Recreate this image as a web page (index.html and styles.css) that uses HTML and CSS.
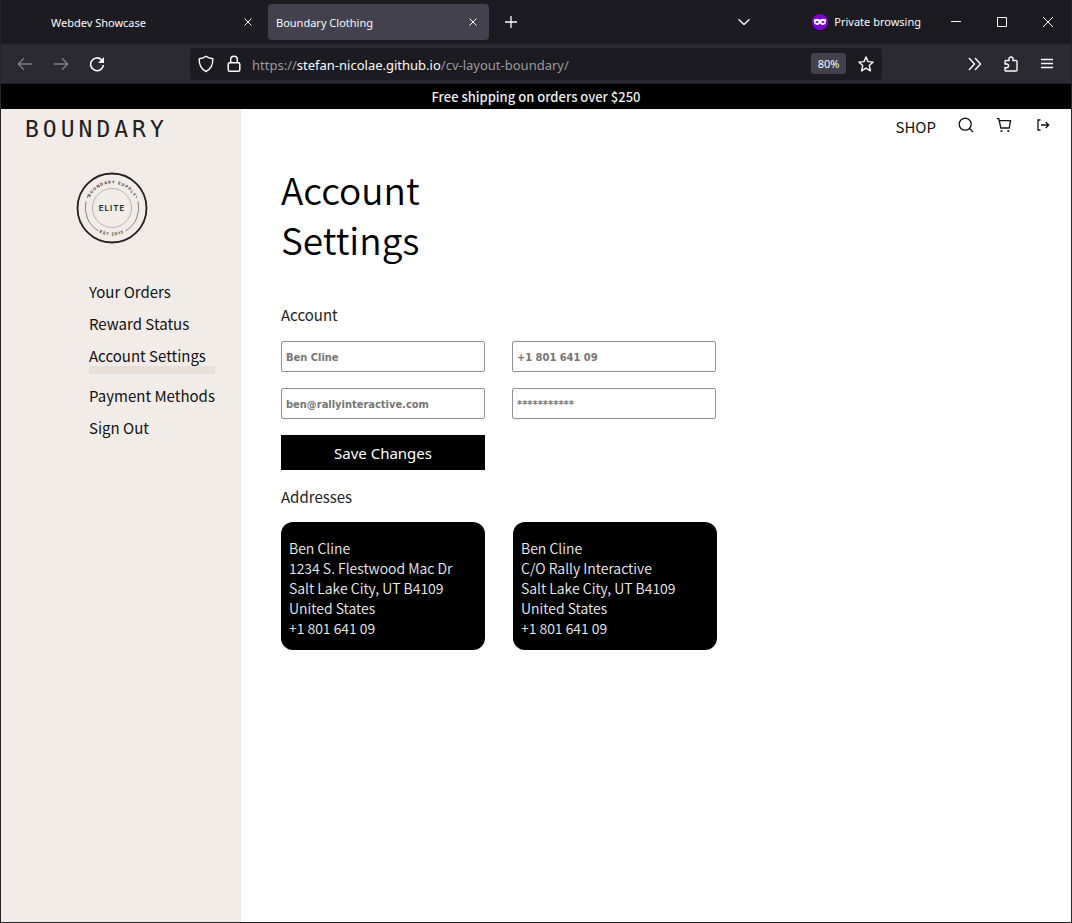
FILE: index.html
```html
<!DOCTYPE html>
<html lang="en">
<head>
<meta charset="utf-8">
<meta name="viewport" content="width=device-width, initial-scale=1">
<title>Boundary Clothing</title>
<link rel="stylesheet" href="styles.css">
</head>
<body>
<div class="window">
  <header class="browser">
    <div class="tabs">
      <div class="tab"><span class="tab-title">Webdev Showcase</span>
        <button class="icon-btn" aria-label="Close tab"><svg width="8" height="8" viewBox="0 0 8 8"><path d="M.5.5l7 7M7.500.5l-7 7"/></svg></button></div>
      <div class="tab tab-active"><span class="tab-title">Boundary Clothing</span>
        <button class="icon-btn" aria-label="Close tab"><svg width="8" height="8" viewBox="0 0 8 8"><path d="M.5.5l7 7M7.500.5l-7 7"/></svg></button></div>
      <button class="icon-btn new-tab" aria-label="New tab"><svg width="12" height="12" viewBox="0 0 12 12"><path d="M6 0v12M0 6h12" stroke-width="1.300"/></svg></button>
      <div class="window-tools">
        <button class="icon-btn list-tabs" aria-label="List all tabs"><svg width="14" height="8" viewBox="0 0 14 8"><path d="M1.500 1.200L7 6.500l5.500-5.300" stroke-width="1.300"/></svg></button>
        <span class="private"><svg width="16" height="16" viewBox="0 0 16 16"><circle cx="8" cy="8" r="8" fill="#8000d7" stroke="none"/><path d="M1.800 5.600Q5 4 8 5.700Q11 4 14.200 5.600Q14.400 11 11 11Q9.300 11 8 9.400Q6.700 11 5 11Q1.600 11 1.800 5.600z" fill="#fff" stroke="none"/><ellipse cx="5" cy="8" rx="1.500" ry="1" fill="#8000d7" stroke="none"/><ellipse cx="11" cy="8" rx="1.500" ry="1" fill="#8000d7" stroke="none"/></svg>Private browsing</span>
        <button class="icon-btn caption" aria-label="Minimize"><svg width="10" height="10" viewBox="0 0 10 10"><path d="M0 4.500h10"/></svg></button>
        <button class="icon-btn caption" aria-label="Maximize"><svg width="10" height="10" viewBox="0 0 10 10"><path d="M.5.5h9v9h-9z"/></svg></button>
        <button class="icon-btn caption" aria-label="Close"><svg width="10" height="10" viewBox="0 0 10 10"><path d="M0 0l10 10M10 0L0 10"/></svg></button>
      </div>
    </div>
    <div class="toolbar">
      <div class="history">
        <button class="icon-btn dim" aria-label="Back"><svg width="16" height="16" viewBox="0 0 16 16"><path d="M15 8H1.500M7 2.200L1.300 8 7 13.800" stroke-width="1.300"/></svg></button>
        <button class="icon-btn dim" aria-label="Forward"><svg width="16" height="16" viewBox="0 0 16 16"><path d="M1 8h13.500M9 2.200L14.700 8 9 13.800" stroke-width="1.300"/></svg></button>
        <button class="icon-btn" aria-label="Reload"><svg width="16" height="16" viewBox="0 0 16 16"><path d="M12.600 3.800A6.400 6.400 0 1 0 14.400 9" stroke-width="1.600"/><path d="M15 1v6H9z" fill="#fbfbfe" stroke="none"/></svg></button>
      </div>
      <div class="address">
        <svg width="16" height="18" viewBox="0 0 16 18"><path d="M8 1.300C6 3 3.500 3.600 1.200 3.800C1 9 2 13.500 8 16.500C14 13.500 15 9 14.800 3.800C12.500 3.600 10 3 8 1.300z" stroke-width="1.400"/></svg>
        <svg width="14" height="18" viewBox="0 0 14 18"><rect x="1.200" y="7.700" width="11.600" height="8.500" rx="1.500" stroke-width="1.500"/><path d="M3.700 7.500V4.500a3.300 3.300 0 0 1 6.600 0v3" stroke-width="1.500"/></svg>
        <span class="url">https://<b>stefan-nicolae.github.io</b>/cv-layout-boundary/</span>
        <button class="zoom">80%</button>
        <button class="icon-btn" aria-label="Bookmark"><svg width="16" height="16" viewBox="0 0 16 16"><path d="M8 1l2 4.600 5.200.5-3.900 3.500 1.100 5.300L8 12.200l-4.400 2.700 1.100-5.300L.8 6.100 6 5.600z" stroke-width="1.400" stroke-linejoin="round"/></svg></button>
      </div>
      <div class="actions">
        <button class="icon-btn" aria-label="More tools"><svg width="14" height="14" viewBox="0 0 14 14"><path d="M1 1l5.500 6L1 13M7 1l5.500 6L7 13" stroke-width="1.400"/></svg></button>
        <button class="icon-btn" aria-label="Extensions"><svg width="16" height="16" viewBox="0 0 16 16"><path d="M2 8V5.500a1 1 0 0 1 1-1h3V3a2 2 0 0 1 4 0v1.500H13a1 1 0 0 1 1 1V14a1 1 0 0 1-1 1H3a1 1 0 0 1-1-1v-2.300h1.700a1.850 1.850 0 0 0 0-3.700z" stroke-width="1.400"/></svg></button>
        <button class="icon-btn" aria-label="Menu"><svg width="14" height="14" viewBox="0 0 14 14"><path d="M1 2.500h12M1 6.500h12M1 10.500h12" stroke-width="1.300"/></svg></button>
      </div>
    </div>
  </header>

  <p class="banner">Free shipping on orders over $250</p>

  <div class="page">
    <aside class="sidebar">
      <a class="logo" href="#">BOUNDARY</a>
      <svg class="badge" width="72" height="72" viewBox="0 0 72 72" role="img" aria-label="Elite member">
        <defs><path id="arc-top" d="M11.500 36a24.500 24.500 0 0 1 49 0"/><path id="arc-bottom" d="M8.500 36a27.500 27.500 0 0 0 55 0"/></defs>
        <circle cx="36" cy="36" r="34.500" stroke="#232021" stroke-width="1.800"/>
        <circle cx="36" cy="36" r="19.500" stroke="#aaa5a2" stroke-width=".8"/>
        <path d="M10 29.500A27 27 0 0 0 22.500 59M62 29.500A27 27 0 0 1 49.500 59" stroke="#77726f" stroke-width=".9"/>
        <circle cx="11.500" cy="25" r=".7" fill="#555" stroke="none"/><circle cx="60.500" cy="25" r=".7" fill="#555" stroke="none"/>
        <text class="badge-small" text-anchor="middle"><textPath href="#arc-top" startOffset="50%">BOUNDARY SUPPLY</textPath></text>
        <text class="badge-small" text-anchor="middle"><textPath href="#arc-bottom" startOffset="50%">EST 2015</textPath></text>
        <text class="badge-name" x="36" y="39" text-anchor="middle">ELITE</text>
      </svg>
      <nav class="menu">
        <a href="#">Your Orders</a>
        <a href="#">Reward Status</a>
        <a href="#" class="current">Account Settings</a>
        <a href="#">Payment Methods</a>
        <a href="#">Sign Out</a>
      </nav>
    </aside>

    <main class="content">
      <nav class="shop-nav">
        <a href="#" class="shop">SHOP</a>
        <a href="#" aria-label="Search"><svg width="16" height="16" viewBox="0 0 16 16"><circle cx="7.200" cy="7.200" r="6" stroke-width="1.300"/><path d="M11.500 11.500l3.500 3.500" stroke-width="1.300"/></svg></a>
        <a href="#" aria-label="Cart"><svg width="16" height="16" viewBox="0 0 16 16"><path d="M.8 1.700h2l2 9.300h8.400L14.500 3.700H3.300" stroke-width="1.300"/><circle cx="5.500" cy="14" r="1.100" fill="#111" stroke="none"/><circle cx="12.300" cy="14" r="1.100" fill="#111" stroke="none"/></svg></a>
        <a href="#" aria-label="Log out"><svg width="16" height="16" viewBox="0 0 16 16"><path d="M6.500 3H4v10h2.500M7 8h7.500M11.700 5l3 3-3 3" stroke-width="1.300"/></svg></a>
      </nav>
      <div class="settings">
        <h1>Account Settings</h1>
        <h2>Account</h2>
        <form class="form">
          <input type="text" placeholder="Ben Cline" aria-label="Name">
          <input type="tel" placeholder="+1 801 641 09" aria-label="Phone">
          <input type="email" placeholder="ben@rallyinteractive.com" aria-label="Email">
          <input type="password" placeholder="***********" aria-label="Password">
          <button type="button" class="save">Save Changes</button>
        </form>
        <h2>Addresses</h2>
        <div class="addresses">
          <address>Ben Cline<br>1234 S. Flestwood Mac Dr<br>Salt Lake City, UT B4109<br>United States<br>+1 801 641 09</address>
          <address>Ben Cline<br>C/O Rally Interactive<br>Salt Lake City, UT B4109<br>United States<br>+1 801 641 09</address>
        </div>
      </div>
    </main>
  </div>
</div>
</body>
</html>
```
FILE: styles.css
```css
* { box-sizing: border-box; }
body { margin: 0; font-family: "Noto Sans CJK SC", sans-serif; color: #000; }
a { color: inherit; text-decoration: none; }
svg { display: block; flex: none; fill: none; stroke: currentColor; }
button { font: inherit; color: inherit; cursor: pointer; }

.window { min-height: 100vh; display: flex; flex-direction: column; border: 1px solid #27252a; border-top: 0; }

.browser { font: 11px/16px "Noto Sans", sans-serif; color: #fbfbfe; background: #1c1b22; }
.icon-btn { display: grid; place-items: center; flex: none; width: 16px; height: 16px; padding: 0; border: 0; background: none; }
.tabs { display: flex; align-items: center; height: 44px; padding-left: 42px; }
.tab { display: flex; align-items: center; justify-content: space-between; width: 221px; height: 36px; padding: 0 8px; border-radius: 4px; }
.tab-title { padding-top: 1px; }
.tab-active { background: #42414d; margin-left: 4px; }
.new-tab { margin-left: 14px; }
.window-tools { display: flex; align-items: center; margin-left: auto; }
.list-tabs { margin-right: 60px; }
.private { display: flex; align-items: center; gap: 6px; margin-right: 12px; }
.caption { width: 46px; height: 44px; }
.toolbar { display: flex; align-items: center; height: 40px; padding: 0 16px; background: #2b2a33; border-bottom: 1px solid #1c1b22; }
.history { display: flex; gap: 20px; width: 173px; }
.dim { color: #807f87; }
.address { display: flex; align-items: center; flex: 0 1 692px; height: 32px; padding: 0 8px; border-radius: 4px; background: #1c1b22; }
.address > svg + svg { margin-left: 13px; }
.url { flex: 1; margin-left: 11px; padding-top: 2px; font-size: 13px; color: #9b9a9f; white-space: nowrap; }
.url b { font-weight: 400; color: #fbfbfe; }
.zoom { width: 35px; height: 21px; margin-right: 12px; padding: 0; border: 0; border-radius: 3px; background: #42414d; }
.actions { display: flex; gap: 20px; margin-left: auto; }
.tab svg, .caption svg { stroke-width: 1px; }

.banner { margin: 0; background: #000; color: #eee; font-size: 13px; font-weight: 500; line-height: 25px; text-align: center; }

.page { flex: 1; display: flex; }
.sidebar { flex: 0 0 240px; padding: 6px 24px; background: #f1ece8; }
.logo { display: block; color: #232021; font: 23px/28px "DejaVu Sans Mono", monospace; letter-spacing: 4px; }
.badge { margin: 29px 0 0 51px; }
.badge-small { font: 700 4px "Inter", sans-serif; letter-spacing: 1px; fill: #333; stroke: none; }
.badge-name { font: 600 8px "Inter", sans-serif; letter-spacing: 1px; fill: #232021; stroke: none; }
.menu { display: flex; flex-direction: column; align-items: flex-start; gap: 8px; width: max-content; margin: 36px 0 0 64px; color: #111; font-size: 15px; line-height: 24px; }
.menu .current { width: 100%; height: 30px; margin-bottom: 2px; border-bottom: 8px solid #e8dfd9; }

.content { flex: 1; min-width: 0; }
.shop-nav { display: flex; justify-content: flex-end; gap: 22px; height: 36px; padding: 8px 21px 0; color: #111; }
.shop { font-size: 15px; line-height: 20px; }
.settings { padding: 19px 40px 40px; }
h1 { width: min-content; margin: 0 0 36px; font-size: 37px; font-weight: 350; line-height: 50px; }
h2 { margin: 0; color: #222; font-size: 15px; font-weight: 400; line-height: 30px; }
.form, .addresses { display: grid; grid-template-columns: repeat(2, 204px); column-gap: 27px; }
.form { row-gap: 16px; margin: 11px 0 12px; }
input { min-width: 0; height: 31px; padding: 1px 4px 0; border: 1px solid #8f8f9d; border-radius: 2px; background: #fff; font: 700 11px "DejaVu Sans Condensed", sans-serif; }
input::placeholder { color: #757575; opacity: 1; }
.save { height: 35px; padding: 0; border: 0; background: #000; color: #fff; font: 15px "Noto Sans", sans-serif; }
.addresses { column-gap: 28px; margin-top: 10px; }
address { padding: 16px 8px 12px; border-radius: 12px; background: #000; color: #eee; font-size: 14px; font-style: normal; font-weight: 350; line-height: 20px; white-space: nowrap; }
```
